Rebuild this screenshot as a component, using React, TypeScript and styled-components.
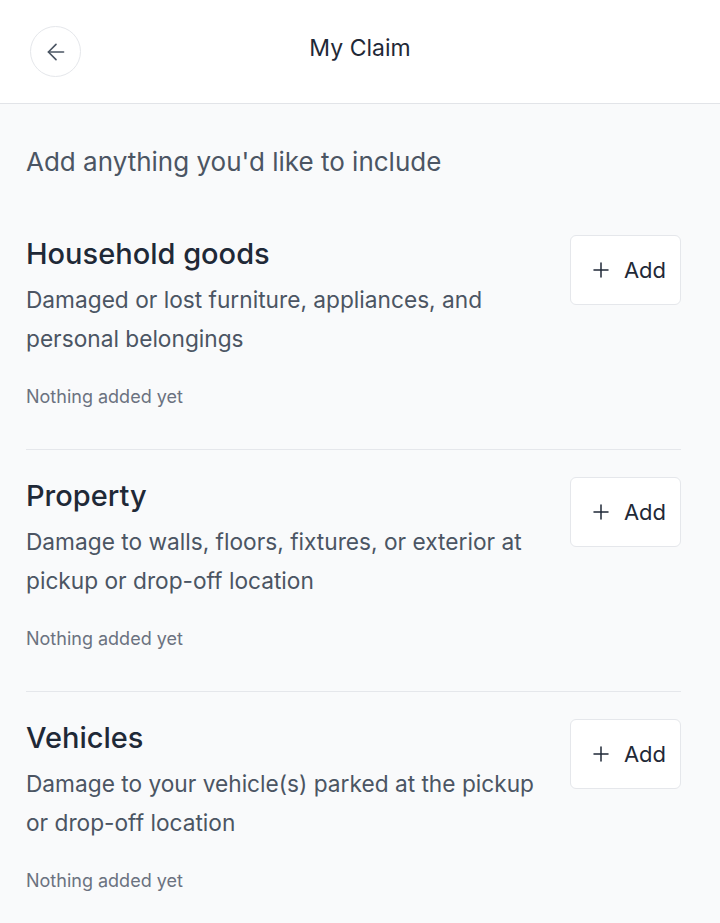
import styled, { createGlobalStyle } from "styled-components";
import { ArrowLeft, Plus } from "lucide-react";

const GlobalStyle = createGlobalStyle`
  html, body {
    margin: 0;
    padding: 0;
    background: #f9fafb;
    font-family: Inter, "Noto Sans", sans-serif;
  }
  * {
    box-sizing: border-box;
  }
`;

const Header = styled.header`
  height: 104px;
  background: #ffffff;
  border-bottom: 1px solid #e2e4e8;
  display: grid;
  grid-template-columns: 80px 1fr 80px;
  align-items: center;
  padding: 0 30px;
`;

const BackButton = styled.button`
  width: 51px;
  height: 51px;
  border-radius: 50%;
  border: 1px solid #e5e7eb;
  background: #ffffff;
  display: flex;
  align-items: center;
  justify-content: center;
  color: #4b5563;
  padding: 0;
  cursor: pointer;
`;

const HeaderTitle = styled.h1`
  margin: 0;
  text-align: center;
  font-size: 23px;
  font-weight: 400;
  color: #1f2937;
  margin-top: -8px;
`;

const Main = styled.main`
  padding: 42px 39px 0 26px;
`;

const Intro = styled.p`
  margin: 0 0 58px;
  font-size: 26px;
  line-height: 32px;
  color: #4b5563;
`;

const Section = styled.section<{ $last?: boolean }>`
  display: flex;
  justify-content: space-between;
  align-items: flex-start;
  gap: 24px;
  padding-bottom: ${(p) => (p.$last ? "20px" : "40px")};
  margin-bottom: 28px;
  border-bottom: ${(p) => (p.$last ? "none" : "1px solid #e5e7eb")};
`;

const SectionText = styled.div`
  display: flex;
  flex-direction: column;
  max-width: 522px;
`;

const SectionTitle = styled.h2`
  margin: 0;
  font-size: 29px;
  line-height: 36px;
  font-weight: 500;
  color: #1f2937;
`;

const Description = styled.p`
  margin: 8px 0 0;
  font-size: 22.7px;
  line-height: 39px;
  color: #4b5563;
`;

const Empty = styled.p`
  margin: 27px 0 0;
  font-size: 18px;
  line-height: 24px;
  color: #6b7280;
`;

const AddButton = styled.button`
  flex-shrink: 0;
  width: 111px;
  height: 70px;
  border: 1px solid #e5e7eb;
  border-radius: 6px;
  background: #ffffff;
  display: flex;
  align-items: center;
  justify-content: center;
  gap: 11px;
  font-family: inherit;
  font-size: 22px;
  color: #1f2937;
  cursor: pointer;
  padding: 0 0 0 4px;
  margin-top: -1px;
`;

const sections = [
  {
    title: "Household goods",
    description: "Damaged or lost furniture, appliances, and personal belongings",
  },
  {
    title: "Property",
    description:
      "Damage to walls, floors, fixtures, or exterior at pickup or drop-off location",
  },
  {
    title: "Vehicles",
    description:
      "Damage to your vehicle(s) parked at the pickup or drop-off location",
  },
];

function App() {
  return (
    <>
      <GlobalStyle />
      <Header>
        <BackButton aria-label="Back">
          <ArrowLeft size={26} strokeWidth={1.5} />
        </BackButton>
        <HeaderTitle>My Claim</HeaderTitle>
        <span />
      </Header>
      <Main>
        <Intro>Add anything you'd like to include</Intro>
        {sections.map((s, i) => (
          <Section key={s.title} $last={i === sections.length - 1}>
            <SectionText>
              <SectionTitle>{s.title}</SectionTitle>
              <Description>{s.description}</Description>
              <Empty>Nothing added yet</Empty>
            </SectionText>
            <AddButton>
              <Plus size={24} strokeWidth={1.5} />
              Add
            </AddButton>
          </Section>
        ))}
      </Main>
    </>
  );
}

export default App;
